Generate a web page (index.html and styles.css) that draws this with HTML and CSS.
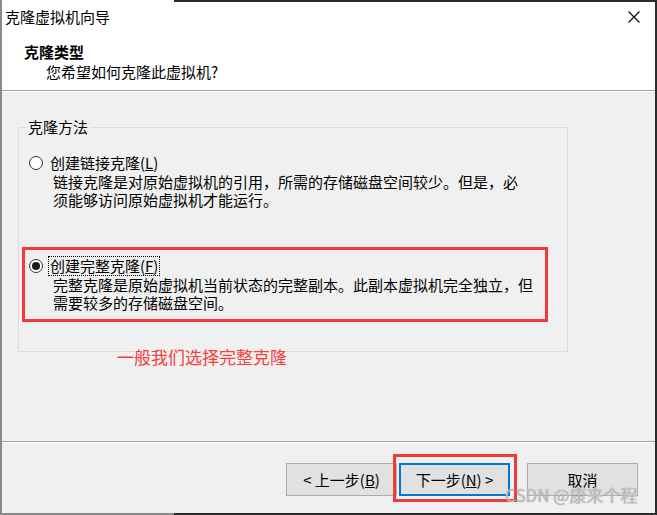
FILE: index.html
```html
<!DOCTYPE html>
<html lang="zh-CN">
<head>
    <meta charset="UTF-8">
    <title>克隆虚拟机向导</title>
    <link rel="stylesheet" href="styles.css">
</head>
<body>
    <div class="dialog">
        <div class="top">
            <div class="titlebar">
                <span class="title">克隆虚拟机向导</span>
                <svg class="close" width="12" height="12" viewBox="0 0 12 12">
                    <path d="M0.5 0.5 L11.5 11.5 M11.5 0.5 L0.5 11.5" stroke="#000" stroke-width="1.1" fill="none"/>
                </svg>
            </div>
            <div class="header">
                <div class="heading">克隆类型</div>
                <div class="subheading">您希望如何克隆此虚拟机?</div>
            </div>
        </div>

        <div class="content">
            <fieldset class="group">
                <legend>克隆方法</legend>

                <div class="option">
                    <div class="option-head">
                        <span class="radio"></span>
                        <span class="option-label">创建链接克隆(<u>L</u>)</span>
                    </div>
                    <p class="option-desc">链接克隆是对原始虚拟机的引用，所需的存储磁盘空间较少。但是，必<br>须能够访问原始虚拟机才能运行。</p>
                </div>

                <div class="option marked">
                    <div class="option-head">
                        <span class="radio checked"></span>
                        <span class="option-label focused">创建完整克隆(<u>F</u>)</span>
                    </div>
                    <p class="option-desc">完整克隆是原始虚拟机当前状态的完整副本。此副本虚拟机完全独立，但<br>需要较多的存储磁盘空间。</p>
                </div>
            </fieldset>

            <div class="note">一般我们选择完整克隆</div>
        </div>

        <div class="footer">
            <button class="btn">&lt; 上一步(<u>B</u>)</button>
            <button class="btn btn-default marked-btn">下一步(<u>N</u>) &gt;</button>
            <button class="btn btn-cancel">取消</button>
        </div>

        <div class="watermark">CSDN @康来个程</div>
    </div>
</body>
</html>
```

FILE: styles.css
```css
* {
    box-sizing: border-box;
}
body {
    margin: 0;
    background-color: #ffffff;
    font-family: "Noto Sans CJK SC", "Liberation Sans", sans-serif;
    font-size: 15px;
    color: #000000;
}
.dialog {
    position: relative;
    width: 657px;
    height: 515px;
    border-left: 2px solid #8a8a8a;
    border-right: 2px solid #2b2b2b;
    border-bottom: 2px solid #8a8a8a;
    background-color: #ffffff;
}
.dialog::before,
.dialog::after {
    content: "";
    position: absolute;
    left: 172px;
    right: -2px;
    height: 2px;
    background-color: #2b2b2b;
}
.dialog::before {
    top: 0;
}
.dialog::after {
    bottom: -2px;
}

/* title bar and header */
.top {
    height: 91px;
    border-bottom: 1px solid #a0a0a0;
}
.titlebar {
    display: flex;
    align-items: center;
    justify-content: space-between;
    height: 34px;
    padding: 0 15px 0 3px;
}
.title {
    line-height: 34px;
}
.header {
    padding: 8px 0 0 22px;
}
.heading {
    font-weight: bold;
    line-height: 20px;
}
.subheading {
    line-height: 20px;
    padding-left: 22px;
}

/* main area */
.content {
    position: relative;
    height: 351px;
    border-top: 1px solid #ffffff;
    border-bottom: 1px solid #a0a0a0;
    background-color: #f0f0f0;
    padding-top: 26px;
}
.group {
    margin: 0 0 0 16px;
    width: 550px;
    height: 234px;
    padding: 0 0 0 6px;
    border: 1px solid #dcdcdc;
}
.group legend {
    margin-left: 1px;
    padding: 0 2px;
    line-height: 18px;
}
.option {
    width: 520px;
    padding: 6px 4px 7px 4px;
    margin-top: 11px;
}
.option + .option {
    margin-top: 34px;
}
.option.marked {
    outline: 3px solid #f23a3a;
}
.option-head {
    display: flex;
    align-items: center;
    height: 20px;
}
.radio {
    width: 14px;
    height: 14px;
    border: 1px solid #333333;
    border-radius: 50%;
    background-color: #ffffff;
    display: flex;
    align-items: center;
    justify-content: center;
    margin-right: 5px;
}
.radio.checked::after {
    content: "";
    width: 8px;
    height: 8px;
    border-radius: 50%;
    background-color: #1a1a1a;
}
.option-label {
    line-height: 18px;
    padding: 0 1px;
    border: 1px dotted transparent;
}
.option-label.focused {
    border-color: #000000;
}
.option-desc {
    margin: 0 0 0 24px;
    line-height: 18px;
}
.note {
    position: absolute;
    left: 115px;
    top: 254px;
    font-size: 17px;
    line-height: 22px;
    color: #f54040;
}

/* buttons */
.footer {
    display: flex;
    justify-content: flex-end;
    gap: 2px;
    height: 71px;
    border-top: 1px solid #ffffff;
    background-color: #f0f0f0;
    padding: 20px 17px 0 0;
}
.btn {
    position: relative;
    width: 111px;
    height: 33px;
    font-family: inherit;
    font-size: 15px;
    color: #000000;
    background-color: #e1e1e1;
    border: 1px solid #adadad;
    padding: 0;
}
.btn-default {
    border: 2px solid #0078d7;
}
.btn-cancel {
    margin-left: 15px;
}
.marked-btn::after {
    content: "";
    position: absolute;
    top: -11px;
    left: -8px;
    right: -9px;
    bottom: -8px;
    border: 3px solid #f23a3a;
}
.watermark {
    position: absolute;
    left: 503px;
    top: 484px;
    font-size: 17px;
    line-height: 22px;
    color: rgba(200, 200, 200, 0.85);
    text-shadow: 0 0 1px #8a8a8a;
}
```
